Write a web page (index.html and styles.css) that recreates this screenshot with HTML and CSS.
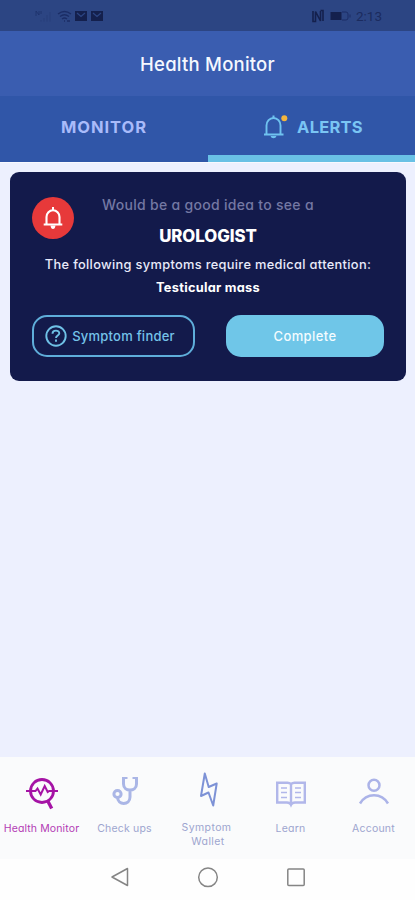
FILE: index.html
```html
<!DOCTYPE html>
<html lang="en">
<head>
<meta charset="utf-8">
<title>Health Monitor</title>
<link rel="stylesheet" href="styles.css">
</head>
<body>
<div class="app">
  <div class="status">
    <svg class="status-left" width="72" height="16" viewBox="0 0 72 16">
      <g fill="none" stroke="#1b2d66" stroke-width="1">
        <path d="M2 8V3l3 4V3M7 3v3" opacity=".7"/>
        <path d="M7 12v1.500M10 10v3.500M13 7v6.500M16 4v9.500" opacity=".3"/>
        <path d="M24 6q6.500-5 13 0M26 8.500q4.500-3.500 9 0M28 11q2.500-2 5 0M30 13h1M33 13h3" stroke-width="1.300"/>
      </g>
      <path d="M41 3h12v10H41zM57 3h12v10H57z" fill="#14204d"/>
      <path d="m43 5 4 3.500L51 5M59 5l4 3.500L67 5" fill="none" stroke="#2c4583" stroke-width="1.200"/>
    </svg>
    <div class="status-right">
      <svg width="40" height="14" viewBox="0 0 40 14">
        <path d="M1 2v10.500h2.500V2.500L8.500 12V2M8.500 1.500H11V12" fill="none" stroke="#14204d" stroke-width="1.600"/>
        <path d="M18.500 3h11v8h-11z" fill="#14204d"/>
        <path d="M30 3h4q2 0 2 2v4q0 2-2 2h-4M38 5.500v3" fill="none" stroke="#1b2d66" stroke-width="1"/>
      </svg>
      <span class="clock">2:13</span>
    </div>
  </div>
  <header class="header"><h1>Health Monitor</h1></header>
  <nav class="tabs">
    <div class="tab"><span class="tab-monitor">MONITOR</span></div>
    <div class="tab active">
      <svg width="26" height="26" viewBox="0 0 26 26">
        <path d="M2 20.500h19.500M4.500 20V11.500a7 7.500 0 0 1 14 0V20" fill="none" stroke="#6fc3f0" stroke-width="1.900"/>
        <path d="M10.500 1.500h2v3h-2zM8.500 22h6q-.7 2.300-3 2.300T8.500 22z" fill="#6fc3f0"/>
        <circle cx="22.300" cy="4.300" r="3" fill="#f4b53c"/>
      </svg>
      <span class="tab-alerts">ALERTS</span>
    </div>
  </nav>
  <main class="content">
    <section class="card">
      <div class="badge">
        <svg width="20" height="24" viewBox="0 0 20 24">
          <path d="M.7 18.500h18.600M3.500 18V11a6.500 6.800 0 0 1 13 0v7" fill="none" stroke="#fff" stroke-width="2.100"/>
          <path d="M9 1h2v4H9zM7.500 19.500h5q-.5 3.500-2.500 3.500t-2.500-3.500z" fill="#fff"/>
        </svg>
      </div>
      <p class="lead">Would be a good idea to see a</p>
      <h2>UROLOGIST</h2>
      <p class="desc">The following symptoms require medical attention:</p>
      <p class="symptom">Testicular mass</p>
      <div class="actions">
        <div class="button outline">
          <svg width="22" height="22" viewBox="0 0 22 22" fill="none" stroke="#6fc1e6" stroke-width="1.900">
            <circle cx="11" cy="11" r="9.700"/>
            <path d="M7.500 8.800c0-4.200 6.800-4 6.800-.5 0 2.200-3.300 2.400-3.300 4.700M11 14.500v2.200"/>
          </svg>
          <span>Symptom finder</span>
        </div>
        <div class="button solid"><span>Complete</span></div>
      </div>
    </section>
  </main>
  <nav class="bottom">
    <div class="item current">
      <svg width="34" height="34" viewBox="0 0 34 34" fill="none" stroke="#a513a5" stroke-width="2.800">
        <circle cx="17" cy="14" r="11.500"/>
        <path d="m22.500 23.500 4.200 8" stroke-width="3.400"/>
        <path d="M1 14h9.500l2-2.500 3.200 6 4-8.500 3 6 1.500-1H33" stroke-width="2"/>
      </svg>
      <span>Health Monitor</span>
    </div>
    <div class="item">
      <svg width="34" height="34" viewBox="0 0 34 34" fill="none" stroke="#aab6e6" stroke-width="3">
        <path d="M19.500 .5h-4V7c0 8 13 8 13 0V.5h-4M22 13v7c0 8.500-12.500 8.500-12.500 0"/>
        <circle cx="9.500" cy="17" r="3.600"/>
      </svg>
      <span>Check ups</span>
    </div>
    <div class="item wallet">
      <svg width="34" height="38" viewBox="0 0 34 38" fill="none" stroke="#7d92d6" stroke-width="2" stroke-linejoin="round">
        <path d="M14.800 3.500 11 26l7.500-3.500 4.700 13 3.500-22-8 3.500z"/>
      </svg>
      <span class="wallet-label">Symptom<br><span class="wallet-line">Wallet</span></span>
    </div>
    <div class="item">
      <svg width="34" height="34" viewBox="0 0 34 34" fill="none" stroke="#b1b7ea" stroke-width="2.400">
        <path d="M17 7q-1.500-1.300-3.500-1.300H3.200v19.800h9.800q3 0 4 2.300 1-2.300 4-2.300h9.800V5.700H20.500q-2 0-3.500 1.300V27"/>
        <path d="M7 11h6M7 15.500h6M7 20.500h6M21 11h6M21 15.500h6M21 20.500h6" stroke-width="1.500"/>
      </svg>
      <span>Learn</span>
    </div>
    <div class="item">
      <svg width="34" height="34" viewBox="0 0 34 34" fill="none" stroke="#abb3e8" stroke-width="2.500">
        <circle cx="17" cy="8.200" r="5.500"/>
        <path d="M3 26.500c6.500-11 21.500-11 28 0"/>
      </svg>
      <span>Account</span>
    </div>
  </nav>
  <div class="system">
    <svg width="22" height="22" viewBox="0 0 22 22"><path d="M18.500 2.500v17L3 11z"/></svg>
    <svg width="22" height="22" viewBox="0 0 22 22"><circle cx="11" cy="11.300" r="9.300"/></svg>
    <svg width="22" height="22" viewBox="0 0 22 22"><rect x="2.800" y="3" width="16.400" height="16.400" rx="1"/></svg>
  </div>
</div>
</body>
</html>
```
FILE: styles.css
```css
* { box-sizing: border-box; }
body, h1, h2, p { margin: 0; }
body {
  font-family: Inter, "Open Sans", sans-serif;
  font-feature-settings: "cv11";
  background: #edf0fe;
}
svg { display: block; flex: none; }
span, h1, h2, p { white-space: nowrap; }
.app { height: 900px; display: flex; flex-direction: column; }

.status {
  height: 31px;
  background: #2c4583;
  display: flex;
  justify-content: space-between;
  align-items: center;
  padding: 1px 33px 0 34px;
}
.status-right { display: flex; align-items: center; gap: 4px; }
.clock { font: 13.5px/16px Roboto, sans-serif; color: #1b2b5e; }

.header {
  height: 65px;
  background: #3a5db0;
  display: flex;
  align-items: center;
  justify-content: center;
  padding-top: 1px;
}
h1 { font-size: 18.5px; font-weight: 450; letter-spacing: .22px; color: #f5f8ff; }

.tabs {
  height: 66px;
  background: #3056a8;
  display: grid;
  grid-template-columns: 208px 1fr;
  font-size: 16.5px;
  font-weight: 700;
}
.tab { display: flex; align-items: center; justify-content: center; padding-bottom: 4px; color: #a9bbfa; }
.tab.active { border-bottom: 7px solid #69c1e5; color: #7ac5f4; gap: 9px; padding: 2px 0 0 2px; }
.tab-monitor { letter-spacing: .95px; }
.tab-alerts { letter-spacing: .25px; }

.content { flex: 1; padding: 8.500px 9px 0 10px; border-top: 1px solid #f8f9ff; }
.card {
  position: relative;
  height: 209px;
  border-radius: 9px;
  background: #131a4b;
  color: #fff;
  text-align: center;
  padding: 23px 22px 0 22px;
}
.badge {
  position: absolute;
  left: 22px;
  top: 25.500px;
  width: 42px;
  height: 42px;
  border-radius: 50%;
  background: #e7393a;
  display: grid;
  place-items: center;
}
.lead { font-size: 14px; line-height: 20px; font-weight: 500; letter-spacing: .3px; color: #7478a3; }
h2 { font-size: 16.800px; line-height: 24px; margin-top: 9px; font-weight: 800; letter-spacing: -.05px; }
.desc { font-size: 12.800px; line-height: 18px; margin-top: 8px; font-weight: 500; letter-spacing: .33px; color: #e9ebfa; }
.symptom { font-size: 12.800px; line-height: 18px; margin-top: 5px; font-weight: 700; letter-spacing: .27px; }
.actions { display: grid; grid-template-columns: 163px 158px; justify-content: space-between; margin-top: 18.500px; }
.button {
  height: 42px;
  border-radius: 15px;
  display: flex;
  align-items: center;
  justify-content: center;
  font-size: 13px;
}
.outline { border: 2px solid #5faeda; color: #75c3e9; font-weight: 500; letter-spacing: .24px; gap: 5px; padding-right: 7px; }
.solid { background: #6fc6e8; color: #f4fcff; font-weight: 500; letter-spacing: .4px; }

.bottom {
  height: 102px;
  background: #fafbfc;
  display: grid;
  grid-template-columns: repeat(5, 1fr);
  font-size: 10.500px;
  line-height: 14px;
  text-align: center;
}
.item { display: flex; flex-direction: column; align-items: center; padding-top: 20px; gap: 11px; color: #9da5cf; letter-spacing: .2px; }
.current { color: #b33bb5; letter-spacing: .12px; }
.wallet { padding: 13px 2px 0 0; gap: 13px; }
.wallet-label { letter-spacing: .4px; }
.wallet-line { padding-left: 3px; }

.system {
  height: 41px;
  background: #fefefe;
  display: flex;
  justify-content: center;
  gap: 66px;
  padding-top: 7px;
}
.system svg { fill: none; stroke: #858585; stroke-width: 1.500; stroke-linejoin: round; }
```
